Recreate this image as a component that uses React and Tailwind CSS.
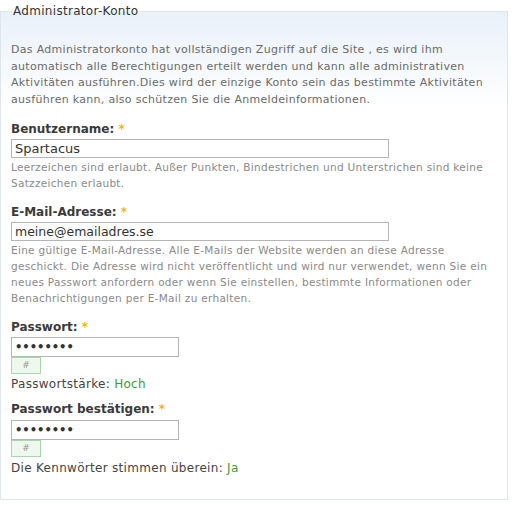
import React from 'react';

const font = { fontFamily: '"DejaVu Sans", Verdana, sans-serif' };

function Label({ children }) {
  return (
    <label className="block text-[12px] font-bold text-[#3a3a3a] leading-[16px]">
      {children} <span className="text-[#f5b70f]">*</span>
    </label>
  );
}

function Strength() {
  return (
    <div className="w-[30px] h-[17px] border border-[#a8d8a8] bg-[#eef8ee] text-[9px] text-[#9a9a9a] flex items-center justify-center">
      #
    </div>
  );
}

function Hint({ lines }) {
  return (
    <div className="mt-[1px] text-[10.5px] tracking-[0.3px] leading-[16px] text-[#8a8a8a] whitespace-nowrap">
      {lines.map((l, i) => (
        <div key={i}>{l}</div>
      ))}
    </div>
  );
}

const inputCls =
  'block h-[19px] border border-[#b5b5b5] px-[3px] text-[#333] outline-none bg-white';

export default function App() {
  return (
    <div className="w-[521px] h-[509px] bg-white pt-[4px]" style={font}>
      <fieldset className="min-w-0 w-[508px] h-[496px] border border-[#dde6ee] bg-gradient-to-b from-[#e9f1f9] to-white to-[20%] px-[10px] pb-0 pt-0">
        <legend className="ml-[1px] px-[1px] text-[12px] tracking-[0.3px] text-[#333] leading-[14px]">Administrator-Konto</legend>
        <div className="mt-[24px] text-[11px] tracking-[0.3px] leading-[16.5px] text-[#6a6a6a] whitespace-nowrap">
          <div>Das Administratorkonto hat vollständigen Zugriff auf die Site , es wird ihm</div>
          <div>automatisch alle Berechtigungen erteilt werden und kann alle administrativen</div>
          <div>Aktivitäten ausführen.Dies wird der einzige Konto sein das bestimmte Aktivitäten</div>
          <div>ausführen kann, also schützen Sie die Anmeldeinformationen.</div>
        </div>

        <div className="mt-[13px]">
          <Label>Benutzername:</Label>
          <input readOnly value="Spartacus" className={`mt-[2px] w-[378px] text-[13px] ${inputCls}`} />
          <Hint
            lines={[
              'Leerzeichen sind erlaubt. Außer Punkten, Bindestrichen und Unterstrichen sind keine',
              'Satzzeichen erlaubt.',
            ]}
          />
        </div>

        <div className="mt-[13px]">
          <Label>E-Mail-Adresse:</Label>
          <input readOnly value="meine@emailadres.se" className={`mt-[2px] w-[378px] text-[12.5px] ${inputCls}`} />
          <Hint
            lines={[
              'Eine gültige E-Mail-Adresse. Alle E-Mails der Website werden an diese Adresse',
              'geschickt. Die Adresse wird nicht veröffentlicht und wird nur verwendet, wenn Sie ein',
              'neues Passwort anfordern oder wenn Sie einstellen, bestimmte Informationen oder',
              'Benachrichtigungen per E-Mail zu erhalten.',
            ]}
          />
        </div>

        <div className="mt-[13px]">
          <Label>Passwort:</Label>
          <input
            readOnly
            type="password"
            value="spartacu"
            className={`mt-[2px] w-[168px] h-[20px] text-[11.5px] font-bold ${inputCls}`}
          />
          <Strength />
          <div className="mt-[2px] text-[12px] tracking-[0.3px] leading-[16px] text-[#444]">
            Passwortstärke: <span className="text-[#3d9a3d]">Hoch</span>
          </div>
        </div>

        <div className="mt-[9px]">
          <Label>Passwort bestätigen:</Label>
          <input
            readOnly
            type="password"
            value="spartacu"
            className={`mt-[3px] w-[168px] h-[20px] text-[11.5px] font-bold ${inputCls}`}
          />
          <Strength />
          <div className="mt-[3px] text-[12px] tracking-[0.3px] leading-[16px] text-[#444]">
            Die Kennwörter stimmen überein: <span className="text-[#3d9a3d]">Ja</span>
          </div>
        </div>
      </fieldset>
    </div>
  );
}
